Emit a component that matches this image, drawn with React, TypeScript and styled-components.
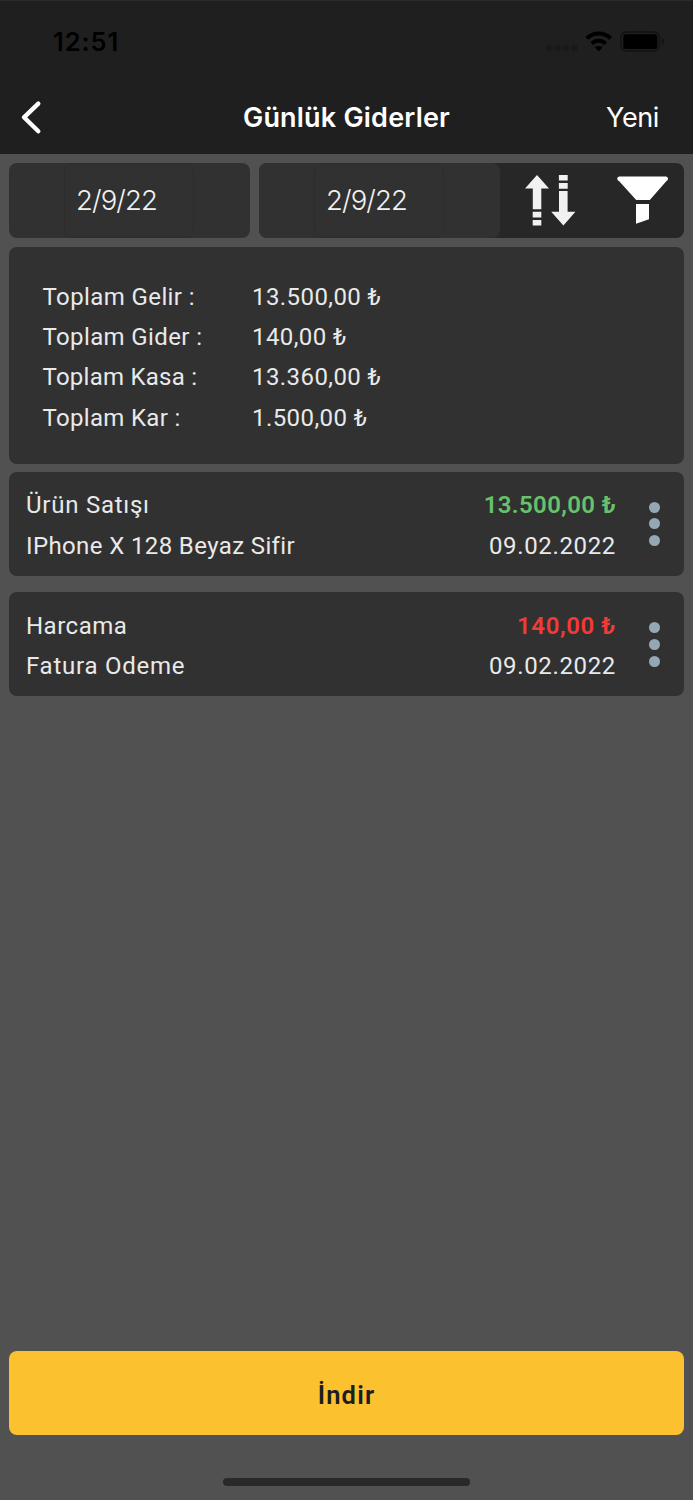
import React from 'react';
import styled, { createGlobalStyle } from 'styled-components';

const GlobalStyle = createGlobalStyle`
  * { box-sizing: border-box; }
  body { margin: 0; background: #515151; }
`;

const system = `Inter, "Liberation Sans", sans-serif`;
const brand = `Roboto, "Noto Sans", sans-serif`;

const Screen = styled.div`
  display: flex;
  flex-direction: column;
  width: 693px;
  height: 1500px;
  background: #515151;
  color: #e9e9e9;
  font-family: ${brand};
  overflow: hidden;
`;

const Header = styled.header`
  height: 154px;
  background: #1f1f1f;
  border-top: 1px solid #2b2b2b;
  font-family: ${system};
`;

const StatusBar = styled.div`
  display: flex;
  justify-content: space-between;
  align-items: center;
  height: 82px;
  padding: 0 28px 0 53px;
`;

const Clock = styled.span`
  color: #000;
  font-size: 25.5px;
  font-weight: 600;
  line-height: 32px;
  letter-spacing: 0.9px;
`;

const NavBar = styled.nav`
  display: grid;
  grid-template-columns: 130px 1fr 130px;
  align-items: center;
  height: 70px;
`;

const BackButton = styled.button`
  display: flex;
  padding: 0 0 2px 20px;
  border: 0;
  background: none;
`;

const Title = styled.h1`
  margin: 0;
  color: #fff;
  font-size: 27px;
  font-weight: 600;
  line-height: 34px;
  letter-spacing: 0.2px;
  text-align: center;
  white-space: nowrap;
`;

const NavAction = styled.span`
  padding-right: 34px;
  color: #fff;
  font-size: 27px;
  font-weight: 400;
  line-height: 34px;
  letter-spacing: -0.4px;
  text-align: right;
`;

const Main = styled.main`
  display: flex;
  flex-direction: column;
  flex: 1;
  padding: 9px 9px 0;
`;

const Toolbar = styled.div`
  display: flex;
  gap: 9px;
  height: 75px;
`;

const FilterGroup = styled.div`
  display: flex;
  flex: 1;
  border-radius: 8px;
  background: #272727;
`;

const DateCell = styled.div`
  display: flex;
  width: 241px;
  height: 75px;
  padding-left: 55px;
  border-radius: 8px;
  background: #313131;
`;

const DateField = styled.div`
  width: 130px;
  height: 75px;
  padding-left: 11px;
  border: 1px solid #2d2d2d;
  border-radius: 8px;
  color: #f1f1f1;
  font-family: ${system};
  font-size: 27.5px;
  font-weight: 350;
  line-height: 73px;
  letter-spacing: -0.9px;
`;

const ToolIcons = styled.div`
  display: flex;
  align-items: center;
  gap: 41px;
  padding-left: 25px;
`;

const Card = styled.section`
  border-radius: 8px;
  background: #313131;
`;

const Summary = styled(Card)`
  height: 217px;
  margin-top: 9px;
  padding: 30px 33.5px;
`;

const SummaryRow = styled.div`
  display: grid;
  grid-template-columns: 209.5px 1fr;
`;

const Entry = styled(Card)<{ $gap: number }>`
  display: flex;
  align-items: center;
  height: 103.6px;
  margin-top: ${p => p.$gap}px;
  padding: 0 24px 0 17px;
`;

const Column = styled.div<{ $end?: boolean }>`
  display: flex;
  flex-direction: column;
  flex: ${p => (p.$end ? 'none' : 1)};
  align-items: ${p => (p.$end ? 'flex-end' : 'flex-start')};
  padding-top: 3.5px;
`;

const Text = styled.span<{ $track?: number; $color?: string; $strong?: boolean }>`
  color: ${p => p.$color || 'inherit'};
  font-size: 24px;
  font-weight: ${p => (p.$strong ? 600 : 400)};
  line-height: 40.2px;
  letter-spacing: ${p => p.$track ?? 0.5}px;
  white-space: nowrap;
`;

const Dots = styled.div`
  display: flex;
  flex-direction: column;
  gap: 5.8px;
  margin-left: 33px;
`;

const Dot = styled.i`
  width: 11px;
  height: 11px;
  border-radius: 50%;
  background: #94a8b4;
`;

const Footer = styled.footer`
  display: flex;
  flex-direction: column;
  align-items: center;
  margin-top: auto;
`;

const Download = styled.button`
  width: 100%;
  height: 84px;
  padding: 3px 0 0;
  border: 0;
  border-radius: 8px;
  background: #fcc12f;
  color: #1b1d20;
  font-family: ${brand};
  font-size: 25.5px;
  font-weight: 600;
  letter-spacing: 1.2px;
`;

const HomeIndicator = styled.div`
  width: 247px;
  height: 8px;
  margin: 43px 0 14px;
  border-radius: 4px;
  background: #292929;
`;

const StatusIcons = () => (
  <svg width="120" height="26" viewBox="545 29 120 26">
    <g fill="#191919">
      <rect x="546.5" y="45" width="6" height="6" rx="1.5" />
      <rect x="554.8" y="45" width="6" height="6" rx="1.5" />
      <rect x="563.1" y="45" width="6" height="6" rx="1.5" />
      <rect x="571.4" y="45" width="6" height="6" rx="1.5" />
    </g>
    <g fill="none" stroke="#000" strokeWidth="4">
      <path d="M586.8 38.4a16.8 16.8 0 0 1 23.8 0" />
      <path d="M591.8 43.6a9.8 9.8 0 0 1 13.8 0" />
    </g>
    <path d="M598.7 51.3l-3.8-3.9a5.6 5.6 0 0 1 7.6 0z" fill="#000" />
    <rect x="621" y="32" width="38.5" height="19" rx="5.5" fill="none" stroke="#141414" strokeWidth="1.8" />
    <rect x="623.3" y="34.3" width="34" height="14.6" rx="3" fill="#000" />
    <path d="M662 38.3c3 1.2 3 5.4 0 6.6z" fill="#141414" />
  </svg>
);

const BackIcon = () => (
  <svg width="24" height="36" viewBox="20 99 24 36">
    <path d="M38.3 103.7L24 117.3l14.3 14" fill="none" stroke="#fff" strokeWidth="4.4" strokeLinecap="round" strokeLinejoin="round" />
  </svg>
);

const SortIcon = () => (
  <svg width="51" height="52" viewBox="525.5 175 51 52" fill="#f1f1f1">
    <path d="M537.5 175l12 13.5h-7.7v20.7h-8.5v-20.7h-7.8z" />
    <path d="M533.2 211.8h8.6v5.8h-8.6zM533.2 220h8.6v5.5h-8.6z" />
    <path d="M559.4 175h8.8v5.5h-8.8zM559.4 183h8.8v5.7h-8.8z" />
    <path d="M559.5 191h8.6v20.8h7.8l-12 13.7-12.2-13.7h7.8z" />
  </svg>
);

const FilterIcon = () => (
  <svg width="52" height="50" viewBox="617 176 52 50" fill="#fff">
    <path d="M619.5 176.5h46.2c2.6 0 3.1 3.4.8 4.6L649.8 200h-13.6l-17.2-18.9c-2.6-1.2-2-4.6.5-4.6z" />
    <path d="M636 204h13v15.2l-13 4.6z" />
  </svg>
);

const totals = [
  { label: 'Toplam Gelir :', value: '13.500,00 ₺', track: 0.4 },
  { label: 'Toplam Gider :', value: '140,00 ₺', track: 0.38 },
  { label: 'Toplam Kasa :', value: '13.360,00 ₺', track: 0.25 },
  { label: 'Toplam Kar :', value: '1.500,00 ₺', track: 0.32 },
];

const entries = [
  {
    kind: 'Ürün Satışı', kindTrack: 0.75,
    note: 'IPhone X 128 Beyaz Sifir', noteTrack: 0.38,
    amount: '13.500,00 ₺', amountTrack: 0.35,
    date: '09.02.2022', color: '#67c26b', gap: 8,
  },
  {
    kind: 'Harcama', kindTrack: 0.5,
    note: 'Fatura Odeme', noteTrack: 0.75,
    amount: '140,00 ₺', amountTrack: 0.6,
    date: '09.02.2022', color: '#f23a37', gap: 16.9,
  },
];

export default function App() {
  return (
    <Screen>
      <GlobalStyle />
      <Header>
        <StatusBar>
          <Clock>12:51</Clock>
          <StatusIcons />
        </StatusBar>
        <NavBar>
          <BackButton aria-label="Geri"><BackIcon /></BackButton>
          <Title>Günlük Giderler</Title>
          <NavAction>Yeni</NavAction>
        </NavBar>
      </Header>
      <Main>
        <Toolbar>
          <DateCell><DateField>2/9/22</DateField></DateCell>
          <FilterGroup>
            <DateCell><DateField>2/9/22</DateField></DateCell>
            <ToolIcons><SortIcon /><FilterIcon /></ToolIcons>
          </FilterGroup>
        </Toolbar>
        <Summary>
          {totals.map(t => (
            <SummaryRow key={t.label}>
              <Text $track={t.track}>{t.label}</Text>
              <Text $track={0.42}>{t.value}</Text>
            </SummaryRow>
          ))}
        </Summary>
        {entries.map(e => (
          <Entry key={e.kind} $gap={e.gap}>
            <Column>
              <Text $track={e.kindTrack}>{e.kind}</Text>
              <Text $track={e.noteTrack}>{e.note}</Text>
            </Column>
            <Column $end>
              <Text $color={e.color} $strong $track={e.amountTrack}>{e.amount}</Text>
              <Text $track={0.65}>{e.date}</Text>
            </Column>
            <Dots><Dot /><Dot /><Dot /></Dots>
          </Entry>
        ))}
        <Footer>
          <Download>İndir</Download>
          <HomeIndicator />
        </Footer>
      </Main>
    </Screen>
  );
}
